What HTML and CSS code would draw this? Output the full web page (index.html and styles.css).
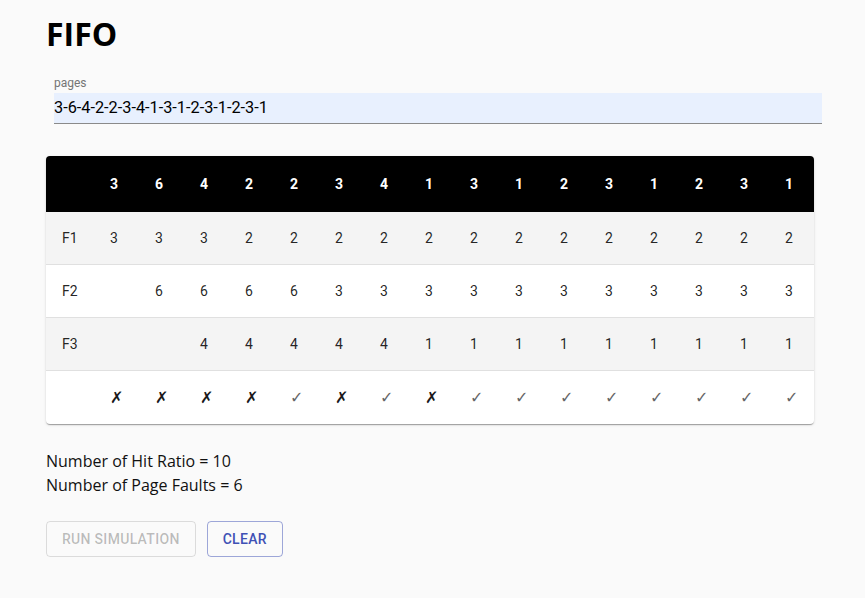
FILE: index.html
```html
<!DOCTYPE html>
<html>
<head>
<meta charset="utf-8">
<link rel="stylesheet" href="styles.css">
</head>
<body>
<main class="page">
  <h1 class="title">FIFO</h1>
  <div class="field">
    <label class="field-label">pages</label>
    <div class="field-input">3-6-4-2-2-3-4-1-3-1-2-3-1-2-3-1</div>
  </div>
  <div class="card">
    <table class="sim">
      <colgroup>
        <col class="c-first">
        <col><col><col><col><col><col><col><col><col><col><col><col><col><col><col><col>
      </colgroup>
      <thead>
        <tr><th></th><th>3</th><th>6</th><th>4</th><th>2</th><th>2</th><th>3</th><th>4</th><th>1</th><th>3</th><th>1</th><th>2</th><th>3</th><th>1</th><th>2</th><th>3</th><th>1</th></tr>
      </thead>
      <tbody>
        <tr class="alt"><td>F1</td><td>3</td><td>3</td><td>3</td><td>2</td><td>2</td><td>2</td><td>2</td><td>2</td><td>2</td><td>2</td><td>2</td><td>2</td><td>2</td><td>2</td><td>2</td><td>2</td></tr>
        <tr><td>F2</td><td></td><td>6</td><td>6</td><td>6</td><td>6</td><td>3</td><td>3</td><td>3</td><td>3</td><td>3</td><td>3</td><td>3</td><td>3</td><td>3</td><td>3</td><td>3</td></tr>
        <tr class="alt"><td>F3</td><td></td><td></td><td>4</td><td>4</td><td>4</td><td>4</td><td>4</td><td>1</td><td>1</td><td>1</td><td>1</td><td>1</td><td>1</td><td>1</td><td>1</td><td>1</td></tr>
        <tr class="last"><td></td><td class="miss">✗</td><td class="miss">✗</td><td class="miss">✗</td><td class="miss">✗</td><td class="hit">✓</td><td class="miss">✗</td><td class="hit">✓</td><td class="miss">✗</td><td class="hit">✓</td><td class="hit">✓</td><td class="hit">✓</td><td class="hit">✓</td><td class="hit">✓</td><td class="hit">✓</td><td class="hit">✓</td><td class="hit">✓</td></tr>
      </tbody>
    </table>
  </div>
  <div class="stats">
    <div>Number of Hit Ratio = 10</div>
    <div>Number of Page Faults = 6</div>
  </div>
  <div class="actions">
    <button class="btn btn-disabled" disabled>Run Simulation</button>
    <button class="btn btn-primary">Clear</button>
  </div>
</main>
</body>
</html>
```

FILE: styles.css
```css
html, body {
  margin: 0;
  padding: 0;
  background: #fafafa;
}
.page {
  padding: 11px 46px 0 46px;
  font-family: "Open Sans", sans-serif;
  color: #000;
}
.title {
  margin: 0;
  font-family: "Open Sans", sans-serif;
  font-weight: 700;
  font-size: 32px;
  line-height: 46px;
}
.field {
  margin: 19px 0 0 8px;
  width: 768px;
  display: flex;
  flex-direction: column;
}
.field-label {
  font-family: Roboto, sans-serif;
  font-size: 12px;
  color: #757575;
  line-height: 14px;
  margin-bottom: 3px;
}
.field-input {
  font-family: Roboto, sans-serif;
  font-size: 16.3px;
  color: #000;
  background: #e8f0fe;
  height: 30px;
  line-height: 30px;
  border-bottom: 1px solid #8a8a8a;
}
.card {
  margin-top: 32px;
  width: 768px;
  background: #fff;
  border-radius: 4px;
  overflow: hidden;
  box-shadow: 0 2px 1px -1px rgba(0,0,0,0.2), 0 1px 1px 0 rgba(0,0,0,0.14), 0 1px 3px 0 rgba(0,0,0,0.12);
}
.sim {
  width: 768px;
  table-layout: fixed;
  border-collapse: collapse;
  font-family: Roboto, sans-serif;
  font-size: 14px;
}
.sim col { width: 45px; }
.sim col.c-first { width: 48px; }
.sim th {
  background: #000;
  color: #fff;
  font-weight: 700;
  height: 56px;
  padding: 0 0 0 16px;
  text-align: left;
}
.sim td {
  height: 52px;
  padding: 0 0 0 16px;
  text-align: left;
  color: rgba(0,0,0,0.87);
  border-bottom: 1px solid #e0e0e0;
}
.sim tr.alt td { background: #f4f4f4; }
.sim tr.last td { border-bottom: none; height: 53px; }
.sim td.miss {
  font-family: "DejaVu Sans", sans-serif;
  color: #1a1a1a;
  font-size: 16px;
}
.sim td.hit {
  font-family: "DejaVu Sans", sans-serif;
  color: #666;
  font-size: 16px;
}
.stats {
  margin-top: 25px;
  font-size: 16px;
  line-height: 24px;
  color: #111;
}
.actions {
  margin-top: 24px;
  display: flex;
  gap: 11px;
}
.btn {
  font-family: Roboto, sans-serif;
  font-weight: 500;
  font-size: 14px;
  letter-spacing: 0.3px;
  text-transform: uppercase;
  height: 36px;
  padding: 0 15px;
  border-radius: 4px;
  background: transparent;
}
.btn-disabled {
  color: rgba(0,0,0,0.26);
  border: 1px solid rgba(0,0,0,0.12);
}
.btn-primary {
  color: #3f51b5;
  border: 1px solid rgba(63,81,181,0.5);
  cursor: pointer;
}
```
